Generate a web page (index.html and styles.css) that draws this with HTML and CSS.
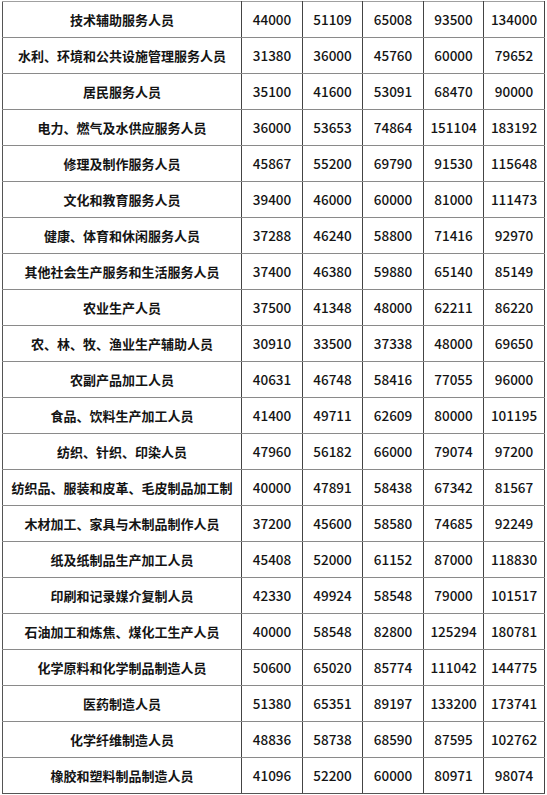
FILE: index.html
```html
<!DOCTYPE html>
<html lang="zh-CN">
<head>
<meta charset="utf-8">
<title>职业工资价位表</title>
<link rel="stylesheet" href="styles.css">
</head>
<body>
<table class="wage">
<colgroup>
<col class="c-name"><col class="c-num"><col class="c-num2"><col class="c-num"><col class="c-num2"><col class="c-num">
</colgroup>
<tbody>
<tr><td class="name">技术辅助服务人员</td><td>44000</td><td>51109</td><td class="lt">65008</td><td class="lt">93500</td><td>134000</td></tr>
<tr><td class="name">水利、环境和公共设施管理服务人员</td><td>31380</td><td>36000</td><td class="lt">45760</td><td class="lt">60000</td><td>79652</td></tr>
<tr><td class="name">居民服务人员</td><td>35100</td><td>41600</td><td class="lt">53091</td><td class="lt">68470</td><td>90000</td></tr>
<tr><td class="name">电力、燃气及水供应服务人员</td><td>36000</td><td>53653</td><td class="lt">74864</td><td class="lt">151104</td><td>183192</td></tr>
<tr><td class="name">修理及制作服务人员</td><td>45867</td><td>55200</td><td class="lt">69790</td><td class="lt">91530</td><td>115648</td></tr>
<tr><td class="name">文化和教育服务人员</td><td>39400</td><td>46000</td><td class="lt">60000</td><td class="lt">81000</td><td>111473</td></tr>
<tr><td class="name">健康、体育和休闲服务人员</td><td>37288</td><td>46240</td><td class="lt">58800</td><td class="lt">71416</td><td>92970</td></tr>
<tr><td class="name">其他社会生产服务和生活服务人员</td><td>37400</td><td>46380</td><td class="lt">59880</td><td class="lt">65140</td><td>85149</td></tr>
<tr><td class="name">农业生产人员</td><td>37500</td><td>41348</td><td class="lt">48000</td><td class="lt">62211</td><td>86220</td></tr>
<tr><td class="name">农、林、牧、渔业生产辅助人员</td><td>30910</td><td>33500</td><td class="lt">37338</td><td class="lt">48000</td><td>69650</td></tr>
<tr><td class="name">农副产品加工人员</td><td>40631</td><td>46748</td><td class="lt">58416</td><td class="lt">77055</td><td>96000</td></tr>
<tr><td class="name">食品、饮料生产加工人员</td><td>41400</td><td>49711</td><td class="lt">62609</td><td class="lt">80000</td><td>101195</td></tr>
<tr><td class="name">纺织、针织、印染人员</td><td>47960</td><td>56182</td><td class="lt">66000</td><td class="lt">79074</td><td>97200</td></tr>
<tr><td class="name">纺织品、服装和皮革、毛皮制品加工制</td><td>40000</td><td>47891</td><td class="lt">58438</td><td class="lt">67342</td><td>81567</td></tr>
<tr><td class="name">木材加工、家具与木制品制作人员</td><td>37200</td><td>45600</td><td class="lt">58580</td><td class="lt">74685</td><td>92249</td></tr>
<tr><td class="name">纸及纸制品生产加工人员</td><td>45408</td><td>52000</td><td class="lt">61152</td><td class="lt">87000</td><td>118830</td></tr>
<tr><td class="name">印刷和记录媒介复制人员</td><td>42330</td><td>49924</td><td class="lt">58548</td><td class="lt">79000</td><td>101517</td></tr>
<tr><td class="name">石油加工和炼焦、煤化工生产人员</td><td>40000</td><td>58548</td><td class="lt">82800</td><td class="lt">125294</td><td>180781</td></tr>
<tr><td class="name">化学原料和化学制品制造人员</td><td>50600</td><td>65020</td><td class="lt">85774</td><td class="lt">111042</td><td>144775</td></tr>
<tr><td class="name">医药制造人员</td><td>51380</td><td>65351</td><td class="lt">89197</td><td class="lt">133200</td><td>173741</td></tr>
<tr><td class="name">化学纤维制造人员</td><td>48836</td><td>58738</td><td class="lt">68590</td><td class="lt">87595</td><td>102762</td></tr>
<tr><td class="name">橡胶和塑料制品制造人员</td><td>41096</td><td>52200</td><td class="lt">60000</td><td class="lt">80971</td><td>98074</td></tr>
</tbody>
</table>
</body>
</html>
```
FILE: styles.css
```css
html, body {
  margin: 0;
  padding: 0;
  background: #ffffff;
}

body {
  padding: 1px 0 0 2px;
  font-family: "Noto Sans CJK SC", "Noto Sans", sans-serif;
  color: #141414;
}

.wage {
  border-collapse: collapse;
  table-layout: fixed;
  width: 543px;
}

.c-name { width: 239px; }
.c-num { width: 61px; }
.c-num2 { width: 60px; }

.wage td {
  height: 35px;
  padding: 0;
  border: 1px solid #8a8a8a;
  border-left-color: #444;
  border-right-color: #444;
  text-align: center;
  vertical-align: middle;
  font-size: 13.5px;
  font-weight: 500;
  white-space: nowrap;
  overflow: hidden;
  line-height: 35px;
}

.wage td.name {
  font-size: 13px;
  font-weight: 600;
  border-left-color: #555;
}

.wage td.lt {
  border-left-color: #a8a8a8;
}

.wage tr:first-child td {
  border-top-color: #a0a0a0;
}

.wage tr:last-child td {
  border-bottom-color: #555;
}
```
